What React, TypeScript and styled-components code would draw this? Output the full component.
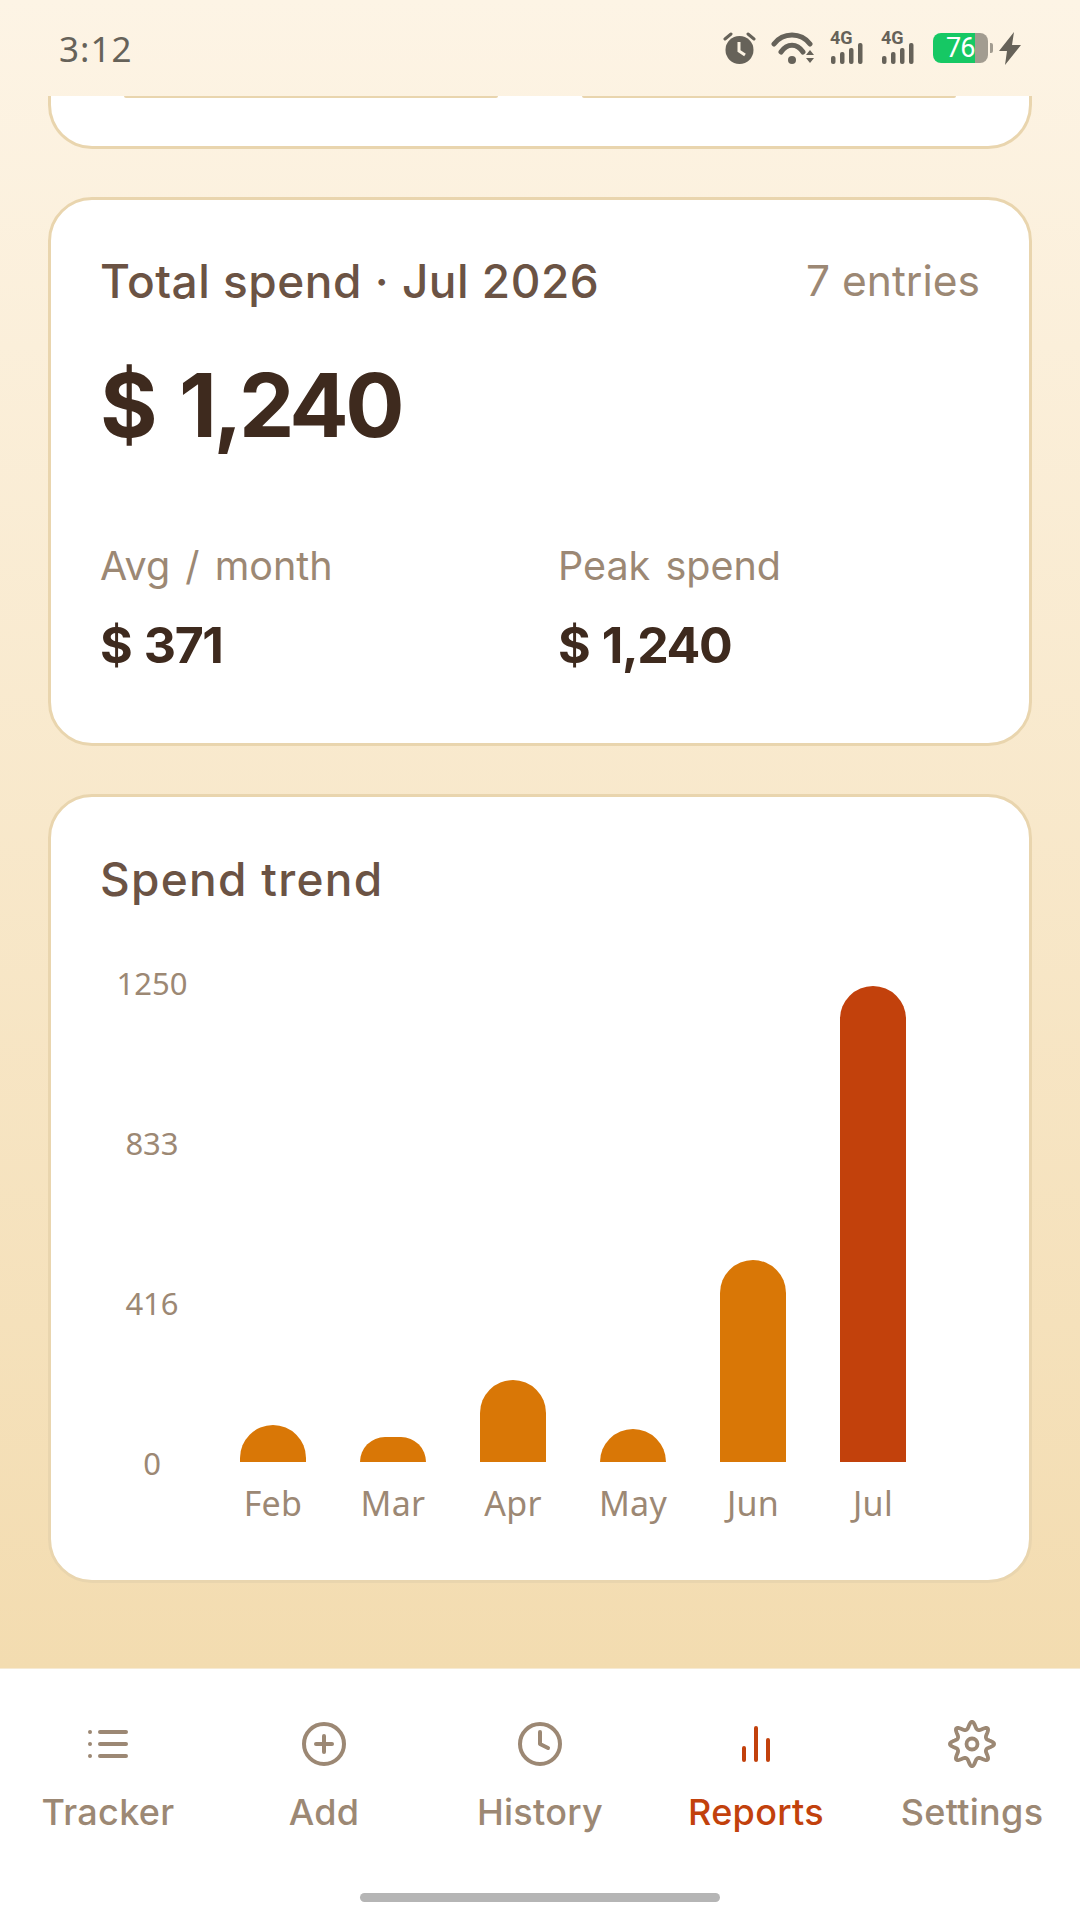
import React from "react";
import styled, { createGlobalStyle } from "styled-components";
import { CirclePlus, Clock } from "lucide-react";

const Global = createGlobalStyle`
  html, body { margin: 0; padding: 0; background: #fff; }
  * { box-sizing: border-box; }
`;

const UI = `Inter, "Noto Sans", sans-serif`;
const MUTED = "#9c8874";
const ACCENT = "#c2410c";
const ORANGE = "#d97706";
const LINE = "#e9d5ae";
const INK = "#6b5344";
const DARK = "#3e2a1e";
const STATUS = "#666259";

const Page = styled.div`
  width: 1080px;
  height: 1920px;
  display: flex;
  flex-direction: column;
  font-family: ${UI};
  overflow: hidden;
`;
const Top = styled.div`
  flex: 1;
  min-height: 0;
  display: flex;
  flex-direction: column;
  background: linear-gradient(180deg, #fdf4e5 0%, #f3dcb0 100%);
`;
const StatusBar = styled.div`
  height: 96px;
  flex: none;
  display: flex;
  align-items: center;
  justify-content: space-between;
  padding: 0 59px;
`;
const Time = styled.span`
  font-family: "Noto Sans", sans-serif;
  font-size: 35px;
  letter-spacing: 1px;
  color: ${STATUS};
`;
const StatusIcons = styled.div`
  display: flex;
  align-items: center;
  height: 36px;
  gap: 15px;
`;
const SignalBox = styled.div`
  position: relative;
  width: 36px;
  height: 34px;
`;
const NetworkTag = styled.span`
  position: absolute;
  left: 0;
  top: -3px;
  font-family: Roboto, sans-serif;
  font-weight: 700;
  font-size: 18px;
  line-height: 20px;
  color: ${STATUS};
`;
const BatteryWrap = styled.div`
  display: flex;
  align-items: center;
  gap: 2px;
  margin-right: -9px;
  margin-left: 1px;
`;
const BatteryBody = styled.div`
  width: 55px;
  height: 30px;
  border-radius: 8px;
  background: linear-gradient(90deg, #16c864 42px, #a29c90 42px);
  color: #fff;
  font-family: Roboto, sans-serif;
  font-size: 27px;
  letter-spacing: -1px;
  line-height: 31px;
  padding-left: 13px;
`;
const BatteryNub = styled.div`
  width: 3px;
  height: 10px;
  background: #a29c90;
  border-radius: 0 2px 2px 0;
`;
const Content = styled.div`
  flex: 1;
  display: flex;
  flex-direction: column;
  gap: 48px;
  padding: 0 48px;
`;
const ClippedCard = styled.div`
  height: 53px;
  flex: none;
  background: #fff;
  border: 3px solid ${LINE};
  border-top: 0;
  border-radius: 0 0 44px 44px;
  display: flex;
  justify-content: space-between;
  align-items: flex-start;
  padding: 0 73px;
`;
const SubCardEdge = styled.div`
  width: 374px;
  height: 2px;
  background: ${LINE};
  border-radius: 0 0 6px 6px;
`;
const Card = styled.section<{ $top: number; $bottom: number }>`
  flex: none;
  background: #fff;
  border: 3px solid ${LINE};
  border-radius: 44px;
  padding: ${(p) => p.$top}px 49px ${(p) => p.$bottom}px;
`;
const TitleRow = styled.div`
  display: flex;
  justify-content: space-between;
  align-items: center;
`;
const Title = styled.h2<{ $track: number }>`
  margin: 0;
  font-size: 46px;
  line-height: 60px;
  font-weight: 500;
  letter-spacing: ${(p) => p.$track}px;
  color: ${INK};
`;
const Entries = styled.span`
  font-size: 42.5px;
  line-height: 60px;
  color: ${MUTED};
`;
const Total = styled.div`
  margin-top: 39px;
  font-size: 88px;
  line-height: 110px;
  font-weight: 700;
  letter-spacing: -3.7px;
  word-spacing: 8px;
  color: ${DARK};
`;
const Stats = styled.div`
  display: grid;
  grid-template-columns: 458px 1fr;
  margin-top: 81px;
  padding-bottom: 12px;
`;
const StatLabel = styled.div`
  font-size: 39.5px;
  line-height: 50px;
  word-spacing: 4px;
  color: ${MUTED};
`;
const StatValue = styled.div`
  margin-top: 24px;
  font-size: 50px;
  line-height: 60px;
  font-weight: 700;
  letter-spacing: -1.4px;
  word-spacing: 2px;
  color: ${DARK};
`;
const Chart = styled.div`
  display: flex;
  margin-top: 54px;
`;
const YAxis = styled.div`
  width: 104px;
  height: 520px;
  margin-right: 9px;
  display: flex;
  flex-direction: column;
  justify-content: space-between;
  align-items: center;
`;
const Tick = styled.span`
  font-family: "Noto Sans", sans-serif;
  font-size: 31px;
  line-height: 40px;
  color: ${MUTED};
`;
const Plot = styled.div`
  display: grid;
  grid-template-columns: repeat(6, 120px);
  padding-top: 19px;
`;
const Slot = styled.div`
  display: flex;
  flex-direction: column;
  align-items: center;
`;
const Track = styled.div`
  height: 480px;
  display: flex;
  align-items: flex-end;
`;
const Bar = styled.div<{ $active?: boolean }>`
  width: 66px;
  border-radius: 33px 33px 0 0;
  background: ${(p) => (p.$active ? ACCENT : ORANGE)};
`;
const Month = styled.span`
  margin-top: 21px;
  font-family: "Noto Sans", sans-serif;
  font-size: 34px;
  letter-spacing: 0.3px;
  line-height: 40px;
  color: ${MUTED};
`;
const Nav = styled.nav`
  height: 252px;
  flex: none;
  background: #fff;
  border-top: 1px solid #f6ead4;
  display: flex;
  flex-direction: column;
`;
const Tabs = styled.div`
  display: grid;
  grid-template-columns: repeat(5, 216px);
  padding-top: 51px;
`;
const Tab = styled.div<{ $active?: boolean }>`
  display: flex;
  flex-direction: column;
  align-items: center;
  color: ${(p) => (p.$active ? ACCENT : MUTED)};
`;
const IconSlot = styled.div`
  width: 48px;
  height: 48px;
  display: flex;
  align-items: center;
  justify-content: center;
  svg {
    flex: none;
  }
`;
const TabLabel = styled.span`
  margin-top: 20px;
  font-size: 36px;
  line-height: 48px;
  letter-spacing: 0.3px;
  font-weight: 500;
`;
const HomeBar = styled.div`
  width: 360px;
  height: 9px;
  border-radius: 5px;
  background: #b5b5b5;
  margin: 57px auto 0;
`;

const Alarm = () => (
  <svg width="33" height="34" viewBox="0 0 33 34">
    <circle cx="16.5" cy="19" r="14" fill={STATUS} />
    <path d="M2 8l6-5M31 8l-6-5" stroke={STATUS} strokeWidth="3" strokeLinecap="round" fill="none" />
    <path d="M16 11v9l6 4" stroke="#fcf3e3" strokeWidth="3" fill="none" />
  </svg>
);
const Wifi = () => (
  <svg width="44" height="34" viewBox="0 0 44 34">
    <g fill="none" stroke={STATUS} strokeWidth="5" strokeLinecap="round">
      <path d="M3 13C12 1 30 1 39 13" />
      <path d="M10 21C16 12 26 12 32 21" />
    </g>
    <circle cx="21" cy="29" r="4" fill={STATUS} />
    <path d="M35 24l4-5 4 5zM35 27h8l-4 5z" fill={STATUS} />
  </svg>
);
const Signal = () => (
  <SignalBox>
    <NetworkTag>4G</NetworkTag>
    <svg width="36" height="34" viewBox="0 0 36 34">
      <g fill={STATUS}>
        <rect x="1" y="25" width="4.5" height="8" rx="2" />
        <rect x="10" y="21" width="4.5" height="12" rx="2" />
        <rect x="19" y="17" width="4.5" height="16" rx="2" />
        <rect x="28" y="12" width="4.5" height="21" rx="2" />
      </g>
    </svg>
  </SignalBox>
);
const Bolt = () => (
  <svg width="22" height="33" viewBox="0 0 22 33">
    <path d="M15 0L0 19h8L6 33l16-20h-9z" fill={STATUS} />
  </svg>
);
const ListIcon = () => (
  <svg width="48" height="48" viewBox="0 0 24 24" fill="none" stroke="currentColor" strokeWidth="2" strokeLinecap="round">
    <path d="M8 6h13M8 12h13M8 18h13M3 6h.01M3 12h.01M3 18h.01" />
  </svg>
);
const BarsIcon = () => (
  <svg width="48" height="48" viewBox="0 0 24 24" fill="none" stroke="currentColor" strokeWidth="2" strokeLinecap="round">
    <path d="M6 20v-6M12 20V4M18 20V10" />
  </svg>
);

const gearPath = (() => {
  const pts: string[] = [];
  for (let i = 0; i < 160; i++) {
    const t = (i / 160) * Math.PI * 2;
    const r = 18.2 + 3.4 * Math.cos(8 * t) + 0.5 * Math.cos(16 * t);
    const x = 26 + r * Math.sin(t);
    const y = 26 - r * Math.cos(t);
    pts.push(`${x.toFixed(2)} ${y.toFixed(2)}`);
  }
  return `M${pts.join("L")}Z`;
})();
const GearIcon = () => (
  <svg width="52" height="52" viewBox="0 0 52 52" fill="none" stroke="currentColor" strokeWidth="3.8" strokeLinejoin="round">
    <path d={gearPath} />
    <circle cx="26" cy="26" r="5.5" />
  </svg>
);

const ticks = [1250, 833, 416, 0];
const months = [
  { m: "Feb", h: 37 },
  { m: "Mar", h: 25 },
  { m: "Apr", h: 82 },
  { m: "May", h: 33 },
  { m: "Jun", h: 202 },
  { m: "Jul", h: 476, active: true },
];
const tabs = [
  { label: "Tracker", icon: <ListIcon /> },
  { label: "Add", icon: <CirclePlus size={48} strokeWidth={2} /> },
  { label: "History", icon: <Clock size={48} strokeWidth={2} /> },
  { label: "Reports", icon: <BarsIcon />, active: true },
  { label: "Settings", icon: <GearIcon /> },
];

export default function App() {
  return (
    <Page>
      <Global />
      <Top>
        <StatusBar>
          <Time>3:12</Time>
          <StatusIcons>
            <Alarm />
            <Wifi />
            <Signal />
            <Signal />
            <BatteryWrap>
              <BatteryBody>76</BatteryBody>
              <BatteryNub />
            </BatteryWrap>
            <Bolt />
          </StatusIcons>
        </StatusBar>
        <Content>
          <ClippedCard>
            <SubCardEdge />
            <SubCardEdge />
          </ClippedCard>
          <Card $top={51} $bottom={56}>
            <TitleRow>
              <Title $track={0.5}>Total spend · Jul 2026</Title>
              <Entries>7 entries</Entries>
            </TitleRow>
            <Total>$ 1,240</Total>
            <Stats>
              <div>
                <StatLabel>Avg / month</StatLabel>
                <StatValue>$ 371</StatValue>
              </div>
              <div>
                <StatLabel>Peak spend</StatLabel>
                <StatValue>$ 1,240</StatValue>
              </div>
            </Stats>
          </Card>
          <Card $top={52} $bottom={57}>
            <Title $track={1.3}>Spend trend</Title>
            <Chart>
              <YAxis>
                {ticks.map((t) => (
                  <Tick key={t}>{t}</Tick>
                ))}
              </YAxis>
              <Plot>
                {months.map((d) => (
                  <Slot key={d.m}>
                    <Track>
                      <Bar $active={d.active} style={{ height: d.h }} />
                    </Track>
                    <Month>{d.m}</Month>
                  </Slot>
                ))}
              </Plot>
            </Chart>
          </Card>
        </Content>
      </Top>
      <Nav>
        <Tabs>
          {tabs.map((t) => (
            <Tab key={t.label} $active={t.active}>
              <IconSlot>{t.icon}</IconSlot>
              <TabLabel>{t.label}</TabLabel>
            </Tab>
          ))}
        </Tabs>
        <HomeBar />
      </Nav>
    </Page>
  );
}
